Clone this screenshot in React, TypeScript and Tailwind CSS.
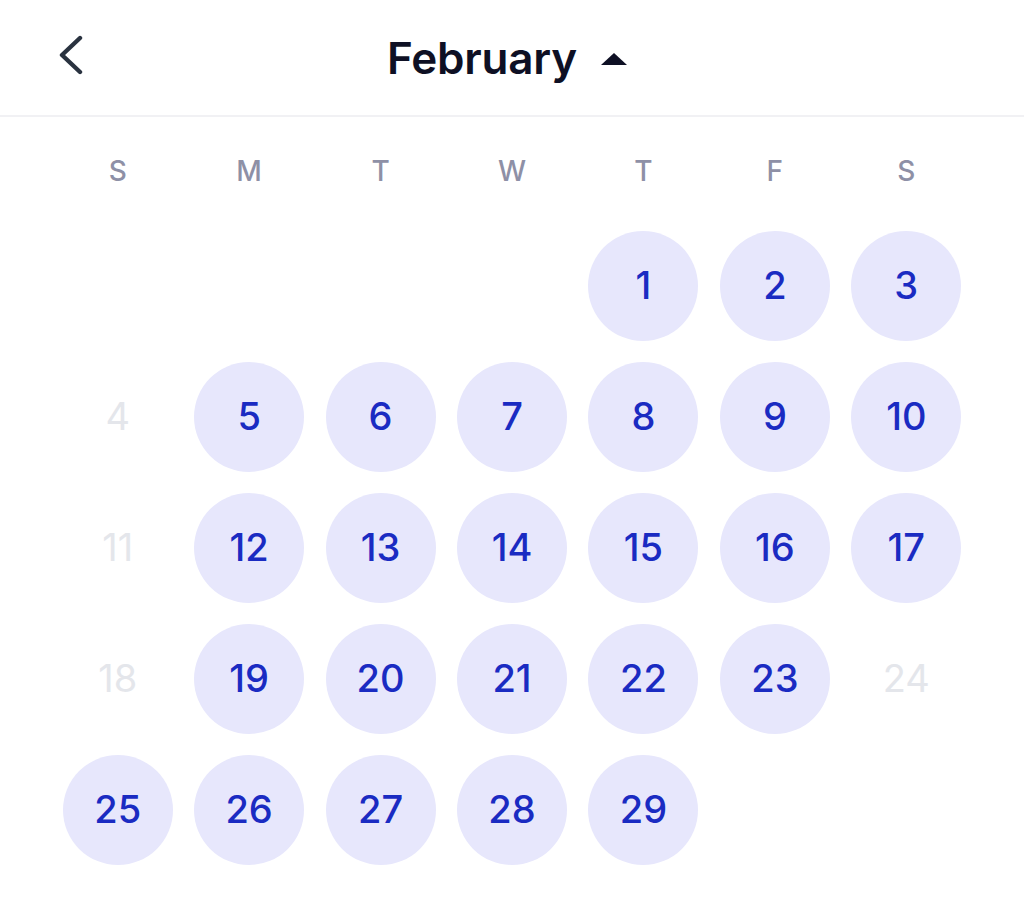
const WEEKDAYS = ["S", "M", "T", "W", "T", "F", "S"];

type Cell = { day: number; disabled?: boolean } | null;

const CELLS: Cell[] = [
  null, null, null, null, { day: 1 }, { day: 2 }, { day: 3 },
  { day: 4, disabled: true }, { day: 5 }, { day: 6 }, { day: 7 }, { day: 8 }, { day: 9 }, { day: 10 },
  { day: 11, disabled: true }, { day: 12 }, { day: 13 }, { day: 14 }, { day: 15 }, { day: 16 }, { day: 17 },
  { day: 18, disabled: true }, { day: 19 }, { day: 20 }, { day: 21 }, { day: 22 }, { day: 23 }, { day: 24, disabled: true },
  { day: 25 }, { day: 26 }, { day: 27 }, { day: 28 }, { day: 29 }, null, null,
];

export default function App() {
  return (
    <div
      className="w-[1024px] h-[915px] bg-white overflow-hidden"
      style={{ fontFamily: "Inter, 'Noto Sans', sans-serif" }}
    >
      {/* Header */}
      <div className="relative h-[117px] flex items-center justify-center border-b-2 border-[#f1f1f4]">
        <button className="absolute left-[57px] top-[35px]">
          <svg width="28" height="40" viewBox="0 0 28 40" fill="none">
            <polyline
              points="23,3 5,20 23,37"
              stroke="#2a3340"
              strokeWidth="4.4"
              strokeLinecap="round"
              strokeLinejoin="round"
            />
          </svg>
        </button>
        <div className="flex items-center gap-[24px] -ml-[10px]">
          <span className="text-[44px] font-semibold tracking-[-0.2px] text-[#0e1024]">February</span>
          <svg width="26" height="12" viewBox="0 0 26 12" className="mt-[2px]">
            <polygon points="13,0 26,12 0,12" fill="#0e1024" />
          </svg>
        </div>
      </div>

      <div className="px-[52px]">
        {/* Weekday labels */}
        <div className="grid grid-cols-7 h-[44px] mt-[32px] items-center">
          {WEEKDAYS.map((d, i) => (
            <span key={i} className="text-center text-[28px] font-medium text-[#8e90a6]">
              {d}
            </span>
          ))}
        </div>

        {/* Days */}
        <div className="grid grid-cols-7 mt-[27px]">
          {CELLS.map((c, i) => (
            <div key={i} className="h-[131px] flex items-center justify-center">
              {c &&
                (c.disabled ? (
                  <span className="text-[38px] text-[#e4e6eb]">{c.day}</span>
                ) : (
                  <div className="w-[110px] h-[110px] rounded-full bg-[#e7e7fc] flex items-center justify-center">
                    <span className="text-[38px] font-medium text-[#1a2bc2]">{c.day}</span>
                  </div>
                ))}
            </div>
          ))}
        </div>
      </div>
    </div>
  );
}
